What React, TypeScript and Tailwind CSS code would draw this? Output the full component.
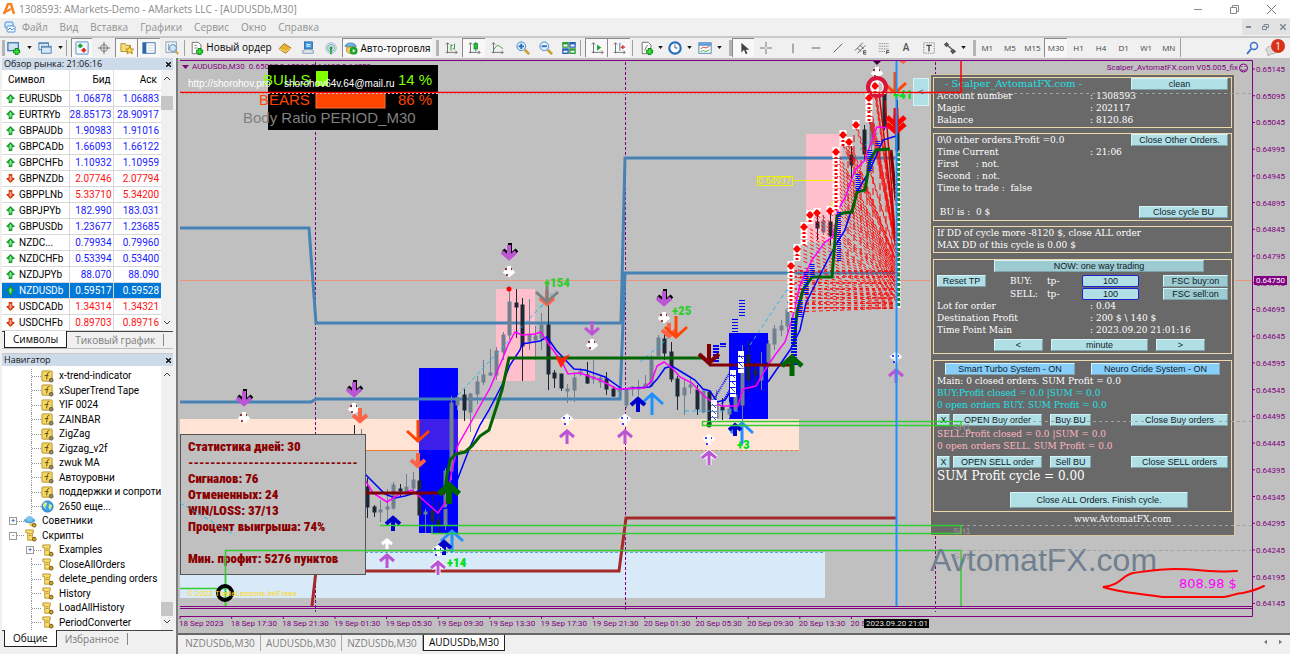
import type { ReactNode } from 'react';
import clsx from 'clsx';

const MENU = ['Файл', 'Вид', 'Вставка', 'Графики', 'Сервис', 'Окно', 'Справка'];
const TIMEFRAMES = ['M1', 'M5', 'M15', 'M30', 'H1', 'H4', 'D1', 'W1', 'MN'];
const CHART_TABS = ['NZDUSDb,M30', 'AUDUSDb,M30', 'NZDUSDb,M30', 'AUDUSDb,M30'];

const QUOTES: [string, string, string, boolean][] = [
  ['EURUSDb', '1.06878', '1.06883', true],
  ['EURTRYb', '28.85173', '28.90917', true],
  ['GBPAUDb', '1.90983', '1.91016', true],
  ['GBPCADb', '1.66093', '1.66122', true],
  ['GBPCHFb', '1.10932', '1.10959', true],
  ['GBPNZDb', '2.07746', '2.07794', false],
  ['GBPPLNb', '5.33710', '5.34200', false],
  ['GBPJPYb', '182.990', '183.031', true],
  ['GBPUSDb', '1.23677', '1.23685', true],
  ['NZDC...', '0.79934', '0.79960', true],
  ['NZDCHFb', '0.53394', '0.53400', true],
  ['NZDJPYb', '88.070', '88.090', true],
  ['NZDUSDb', '0.59517', '0.59528', true],
  ['USDCADb', '1.34314', '1.34321', false],
  ['USDCHFb', '0.89703', '0.89716', false],
];

type TreeItem = { label: string; icon: 'fx' | 'globe' | 'hat' | 'script'; level: number; box?: '+' | '-' };

const TREE: TreeItem[] = [
  { label: 'x-trend-indicator', icon: 'fx', level: 2 },
  { label: 'xSuperTrend Tape', icon: 'fx', level: 2 },
  { label: 'YIF 0024', icon: 'fx', level: 2 },
  { label: 'ZAINBAR', icon: 'fx', level: 2 },
  { label: 'ZigZag', icon: 'fx', level: 2 },
  { label: 'Zigzag_v2f', icon: 'fx', level: 2 },
  { label: 'zwuk MA', icon: 'fx', level: 2 },
  { label: 'Автоуровни', icon: 'fx', level: 2 },
  { label: 'поддержки и сопротив', icon: 'fx', level: 2 },
  { label: '2650 еще...', icon: 'globe', level: 2 },
  { label: 'Советники', icon: 'hat', level: 1, box: '+' },
  { label: 'Скрипты', icon: 'script', level: 1, box: '-' },
  { label: 'Examples', icon: 'script', level: 2, box: '+' },
  { label: 'CloseAllOrders', icon: 'script', level: 2 },
  { label: 'delete_pending orders', icon: 'script', level: 2 },
  { label: 'History', icon: 'script', level: 2 },
  { label: 'LoadAllHistory', icon: 'script', level: 2 },
  { label: 'PeriodConverter', icon: 'script', level: 2 },
];

/* ---------- toolbar ---------- */

const plus = <path d="M11 8v8M7 12h8" stroke="#0b8a12" strokeWidth="4" />;
const plusIn = <path d="M11 9v6M8 12h6" stroke="#35e03c" strokeWidth="2" />;
const axes = <path d="M4 2v12M2 13h13M2 4l2-2 2 2M13 11l2 2-2 2" stroke="#666" strokeWidth="1" />;
const sheet = <path d="M2.500 1.500h7l3 3v10h-10z" fill="#fff" stroke="#666" />;

const ICONS: Record<string, ReactNode> = {
  newChart: <><rect x="1" y="2" width="12" height="9" fill="#cfe3f5" stroke="#3f79ad" strokeWidth="1.500" />{plus}{plusIn}</>,
  profiles: (
    <>
      <rect x="1" y="2" width="11" height="8" fill="#e9f2fb" stroke="#3f79ad" />
      <rect x="4" y="6" width="11" height="8" fill="#d5e6f7" stroke="#3f79ad" />
      <path d="M4 7h11M1 3h11" stroke="#3f79ad" />
    </>
  ),
  market: (
    <>
      <rect x="1" y="1" width="14" height="14" rx="1" fill="#eef6ff" stroke="#4a86c0" />
      <path d="M6 3l2.500 2.500L6 8 3.500 5.500z" fill="#18a52a" stroke="#18a52a" />
      <path d="M10 8l2.500 2.500L10 13l-2.500-2.500z" fill="#e02a1c" stroke="#e02a1c" />
    </>
  ),
  cross: <><circle cx="8" cy="8" r="4" stroke="#666" /><path d="M8 1v14M1 8h14" stroke="#666" /></>,
  navigator: (
    <>
      <path d="M1 3h5l1 2h5v7H1z" fill="#f5dc7a" stroke="#b08a20" />
      <path d="M11 6l1.500 3 3 .3-2.200 2 .7 3.200-3-1.700-3 1.700.7-3.200-2.200-2 3-.3z" fill="#ffd94a" stroke="#b07d12" />
    </>
  ),
  terminal: <><rect x="1" y="2" width="14" height="12" fill="#fff" stroke="#2c68a8" /><rect x="1" y="2" width="4" height="12" fill="#2c68a8" /><path d="M7 5h6M7 8h6M7 11h6" stroke="#b8cfe6" /></>,
  tester: <><rect x="1" y="1" width="12" height="12" fill="#eef3f8" stroke="#8a9db0" /><path d="M4 3v8M7 5v6" stroke="#8a9db0" /><circle cx="9" cy="8" r="4" fill="#cfe6fb" stroke="#4b84b8" /><path d="M12 11l3 4" stroke="#caa03a" strokeWidth="2" /></>,
  order: <>{sheet}<path d="M5 5h3M5 8h4" stroke="#888" />{plus}{plusIn}</>,
  gold: <><path d="M1 9l6-6 8 5-6 6z" fill="#e8b030" stroke="#9a6a10" /><path d="M1 9l8 3 6-4" stroke="#fbe08a" /></>,
  vps: <><rect x="4" y="1" width="9" height="8" fill="#3f96e0" stroke="#2468a8" /><path d="M7 3v4M7 4h4M7 6h4" stroke="#fff" /><path d="M2 11c3-2 9-2 12 0v3H2z" fill="#dfe7ee" stroke="#7c95ad" /></>,
  signals: <><circle cx="8" cy="8" r="6" stroke="#8fb4c8" /><circle cx="8" cy="8" r="4" stroke="#5d93c0" /><circle cx="8" cy="8" r="2" fill="#2aa53a" /><path d="M8 8v7" stroke="#2aa53a" strokeWidth="2" /></>,
  auto: <><path d="M1 6c2-5 11-5 13 0z" fill="#7ab8e6" stroke="#3a7db5" /><path d="M3 7h9v5c-2 3-7 3-9 0z" fill="#f2cf62" stroke="#b08a20" /><circle cx="11" cy="11" r="4.500" fill="#18a52a" /><path d="M10 9v4l3-2z" fill="#fff" /></>,
  bars: <>{axes}<path d="M8 4v7M12 3v6M10 9h2M8 5h2" stroke="#13902a" /></>,
  candles: <>{axes}<path d="M10 1v11" stroke="#13902a" /><rect x="8" y="3" width="4" height="6" fill="#28c23c" stroke="#13902a" /></>,
  line: <>{axes}<path d="M4 10l4-5 3 1 4 3" stroke="#28a53c" /></>,
  zoomIn: <><path d="M10 10l5 5" stroke="#caa03a" strokeWidth="3" /><circle cx="6" cy="6" r="5" fill="#dcefff" stroke="#3a80c2" /><path d="M6 3v6M3 6h6" stroke="#2a6bb0" strokeWidth="2" /></>,
  zoomOut: <><path d="M10 10l5 5" stroke="#caa03a" strokeWidth="3" /><circle cx="6" cy="6" r="5" fill="#dcefff" stroke="#3a80c2" /><path d="M3 6h6" stroke="#2a6bb0" strokeWidth="2" /></>,
  tile: (
    <>
      <path d="M1 2h6v5H1zM9 9h6v5H9z" fill="#fff" stroke="#2f9f35" strokeWidth="1.500" />
      <path d="M9 2h6v5H9zM1 9h6v5H1z" fill="#fff" stroke="#2a62c0" strokeWidth="1.500" />
      <path d="M1 3h6M9 10h6" stroke="#2f9f35" strokeWidth="2" />
      <path d="M9 3h6M1 10h6" stroke="#2a62c0" strokeWidth="2" />
    </>
  ),
  scroll: <>{axes}<path d="M8 4v7l5-3.500z" fill="#28a53c" /></>,
  shift: <>{axes}<path d="M9 2v9" stroke="#2a62c0" /><path d="M15 7h-4M13 5l-2 2 2 2" stroke="#d03a1c" strokeWidth="1.500" /></>,
  indicator: <>{sheet}<path d="M5 11c2 0 1-6 4-6" stroke="#666" />{plus}{plusIn}</>,
  clock: <><circle cx="8" cy="8" r="6.500" fill="#fff" stroke="#2a6fc0" strokeWidth="2.500" /><path d="M8 4v4h3" stroke="#444" /></>,
  template: <><rect x="1" y="2" width="14" height="12" fill="#fff" stroke="#3f79ad" /><path d="M1 4h14" stroke="#5b9ad6" strokeWidth="3" /><path d="M3 9l3-2 3 1 4-2" stroke="#c03020" /><path d="M3 12l3-1 3 1 4-2" stroke="#28a53c" /></>,
  pointer: <path d="M5 2v11l3-3 2 5 2-1-2-4h4z" fill="#444" />,
  crosshair: <path d="M8 1v6M8 9v6M1 8h6M9 8h6" stroke="#666" />,
  vline: <path d="M8 3v11" stroke="#555" />,
  hline: <path d="M3 8h10" stroke="#555" />,
  trend: <path d="M3 13L13 3" stroke="#555" />,
  channel: <><path d="M1 11L10 2M4 14L13 5M4 8l4 4M7 5l4 4" stroke="#555" /><path d="M14 11h-3v4h3M11 13h3" stroke="#444" /></>,
  fibo: <><path d="M2 3h12M2 6h12M2 9h12M2 12h7" stroke="#666" strokeDasharray="1 1" /><path d="M14 11h-3v4M11 13h3" stroke="#444" /></>,
  arrows: <><path d="M4 1l3 3-3 3-3-3z" fill="#555" /><path d="M4 4l7 6" stroke="#555" strokeWidth="1.500" /><path d="M8 11l4-2 3 3-4 3z" fill="#555" /></>,
};

function Icon({ name }: { name: string }) {
  return (
    <svg viewBox="0 0 16 16" className="size-3.5 shrink-0" fill="none" aria-hidden="true">
      {ICONS[name]}
    </svg>
  );
}

function Tool({ name, wide = 'w-[23px]', on, text }: { name: string; wide?: string; on?: boolean; text?: string }) {
  return (
    <button
      aria-label={text ?? name}
      className={clsx('flex h-[19px] items-center justify-center shrink-0', wide, on && 'bg-[#f8f8f8] border-l border-t border-[#8a8a8a]')}
    >
      <Icon name={name} />
      {text && <span className="whitespace-nowrap pl-0.5 text-[10px] text-black">{text}</span>}
    </button>
  );
}

function Drop({ wide }: { wide: string }) {
  return (
    <button aria-label="more" className={clsx('flex items-center justify-center shrink-0', wide)}>
      <svg viewBox="0 0 6 4" className="w-[5px] h-[3px]"><path d="M0 0h6L3 4z" fill="#111" /></svg>
    </button>
  );
}

function Sep({ wide, grip }: { wide: string; grip?: boolean }) {
  return (
    <span className={clsx('flex h-[19px] items-center justify-end gap-px shrink-0', wide)}>
      {!grip && <span className="h-4 w-px bg-[#a0a0a0] mr-1" />}
      {grip && <span className="h-4 w-[3px] bg-[#b4b4b4]" />}
    </span>
  );
}

function Toolbar() {
  return (
    <div className="flex h-[22px] items-start border-t-2 border-[#c9c9c9] bg-[#f0f0f0] overflow-hidden">
      <div className="flex h-[19px] w-full items-center">
        <Sep wide="w-[5px]" grip />
        <Tool name="newChart" wide="w-[18px]" />
        <Drop wide="w-[12px]" />
        <Tool name="profiles" wide="w-[20px]" />
        <Drop wide="w-[10px]" />
        <Sep wide="w-[6px]" />
        <Tool name="market" wide="w-[21px]" on />
        <Tool name="cross" />
        <Tool name="navigator" wide="w-[22px]" on />
        <Tool name="terminal" on />
        <Tool name="tester" />
        <Sep wide="w-[6px]" />
        <Tool name="order" wide="w-[84px]" text="Новый ордер" />
        <Tool name="gold" />
        <Tool name="vps" />
        <Tool name="signals" />
        <Tool name="auto" wide="w-[90px]" on text="Авто-торговля" />
        <Sep wide="w-[7px]" grip />
        <Tool name="bars" />
        <Tool name="candles" on />
        <Tool name="line" />
        <Sep wide="w-[3px]" />
        <Tool name="zoomIn" />
        <Tool name="zoomOut" />
        <Tool name="tile" />
        <Sep wide="w-[5px]" />
        <Tool name="scroll" wide="w-[22px]" on />
        <Tool name="shift" on />
        <Sep wide="w-[7px]" />
        <Tool name="indicator" wide="w-[19px]" />
        <Drop wide="w-[9px]" />
        <Tool name="clock" wide="w-[20px]" />
        <Drop wide="w-[9px]" />
        <Tool name="template" wide="w-[22px]" />
        <Drop wide="w-[6px]" />
        <Sep wide="w-[10px]" grip />
        <Tool name="pointer" wide="w-[22px]" on />
        <Tool name="crosshair" />
        <Sep wide="w-[4px]" />
        <Tool name="vline" />
        <Tool name="hline" />
        <Tool name="trend" wide="w-[22px]" />
        <Tool name="channel" />
        <Tool name="fibo" />
        <button className="w-[22px] text-[10px] font-semibold text-[#555]">A</button>
        <button aria-label="label" className="flex w-[23px] justify-center">
          <svg viewBox="0 0 16 16" className="size-3.5" fill="none">
            <rect x="2" y="2" width="12" height="12" stroke="#666" strokeDasharray="1 1" />
            <path d="M5 5h6M8 5v7" stroke="#444" strokeWidth="1.500" />
          </svg>
        </button>
        <Tool name="arrows" wide="w-[19px]" />
        <Drop wide="w-[8px]" />
        <Sep wide="w-[9px]" grip />
        <div className="flex w-[204px] shrink-0">
          {TIMEFRAMES.map((tf) => (
            <button
              key={tf}
              className={clsx('h-[19px] flex-1 text-[8px] text-[#444]', tf === 'M30' && 'bg-[#f8f8f8] border-l border-t border-[#8a8a8a]')}
            >
              {tf}
            </button>
          ))}
        </div>
        <span className="h-[19px] w-px bg-[#a0a0a0]" />
        <div className="ml-auto mr-1 flex items-center gap-1">
          <button aria-label="search">
            <svg viewBox="0 0 16 16" className="size-4" fill="none">
              <path d="M3 14l4-5" stroke="#3a6fd0" strokeWidth="2" />
              <circle cx="10" cy="6" r="3.500" stroke="#3a6fd0" strokeWidth="1.500" />
            </svg>
          </button>
          <button aria-label="messages">
            <svg viewBox="0 0 22 18" className="w-[22px] h-[18px]" fill="none">
              <path d="M2 11c0-5 10-5 11 0 0 3-3 4-6 4l-3 2v-3c-1-1-2-2-2-3z" fill="#dcdcdc" stroke="#b0b0b0" />
              <circle cx="14" cy="7" r="7" fill="#d9301a" />
              <text x="14" y="11" textAnchor="middle" fontSize="10" fill="#fff">1</text>
            </svg>
          </button>
        </div>
      </div>
    </div>
  );
}

/* ---------- left docks ---------- */

function DockTitle({ children }: { children: ReactNode }) {
  return (
    <div className="flex h-3 shrink-0 items-center justify-between bg-[#cddaea] pl-0.5 pr-0.5 text-[9px] leading-3 text-[#111]">
      <span>{children}</span>
      <button aria-label="close">
        <svg viewBox="0 0 6 6" className="size-[5px]"><path d="M0 0l6 6M6 0L0 6" stroke="#000" strokeWidth="1.500" /></svg>
      </button>
    </div>
  );
}

function DockTabs({ active, other }: { active: string; other: string }) {
  return (
    <div className="flex h-[17px] shrink-0 items-start border-t border-[#444] pl-0.5 text-[10px] leading-4">
      <button className="-mt-px h-[17px] border border-t-0 border-[#222] bg-white px-2 text-black">{active}</button>
      <button className="px-2 text-[#7a7a7a]">{other}</button>
      <span className="mt-[2px] h-3 w-px bg-[#888]" />
    </div>
  );
}

function ScrollBar({ end }: { end?: boolean }) {
  return (
    <div className="flex w-[12px] shrink-0 flex-col items-center bg-[#f0f0f0] py-1.5">
      <svg viewBox="0 0 6 4" className="w-[6px]" fill="none"><path d="M0 4l3-3 3 3" stroke="#444" /></svg>
      <div className={clsx('flex w-full grow flex-col', end ? 'justify-end pb-1' : 'pt-4')}>
        <span className="h-[14px] w-full bg-[#c6c6c6]" />
      </div>
      <svg viewBox="0 0 6 4" className="w-[6px]" fill="none"><path d="M0 0l3 3 3-3" stroke="#444" /></svg>
    </div>
  );
}

function MarketWatch() {
  return (
    <section className="flex h-[291px] flex-col border-b border-[#bdbdbd]">
      <DockTitle>Обзор рынка: 21:06:16</DockTitle>
      <div className="flex grow bg-white">
        <table className="grow table-fixed border-collapse text-[10px] leading-[15px] font-['Roboto','Open_Sans',sans-serif]">
          <thead>
            <tr className="h-5 border-b border-[#d8d8d8] text-black">
              <th className="w-[67px] border-r border-[#e0e0e0] pl-1.5 text-left font-normal">Символ</th>
              <th className="w-[44px] border-r border-[#e0e0e0] pr-0.5 text-right font-normal">Бид</th>
              <th className="pr-1 text-right font-normal">Аск</th>
            </tr>
          </thead>
          <tbody>
            {QUOTES.map(([symbol, bid, ask, up]) => {
              const selected = symbol === 'NZDUSDb';
              const tone = selected ? 'text-white' : up ? 'text-[#1a1aff]' : 'text-[#ff1010]';
              return (
                <tr key={symbol} className={clsx('h-4 border-b border-[#d8d8d8]', selected ? 'bg-[#0078d7] text-white' : 'text-black')}>
                  <td className="border-r border-[#d8d8d8] p-0">
                    <span className="flex items-center gap-1 whitespace-nowrap pl-1">
                      <svg viewBox="0 0 10 10" className={clsx('size-[9px]', !up && 'rotate-180')}>
                        <path d="M5 0l5 5-3 1v4H3V6L0 5z" fill={up ? '#1a9a2c' : '#cc3a14'} />
                        <path d="M5 2l2 3H6v3H4V5H3z" fill={up ? '#7be88a' : '#ffa07a'} />
                      </svg>
                      {symbol}
                    </span>
                  </td>
                  <td className={clsx('border-r border-[#d8d8d8] p-0 pr-px text-right', tone)}>{bid}</td>
                  <td className={clsx('p-0 pr-0.5 text-right', tone)}>{ask}</td>
                </tr>
              );
            })}
          </tbody>
        </table>
        <ScrollBar />
      </div>
      <DockTabs active="Символы" other="Тиковый график" />
    </section>
  );
}

function TreeIcon({ icon }: { icon: TreeItem['icon'] }) {
  return (
    <svg viewBox="0 0 14 14" className="size-[13px] shrink-0" fill="none">
      {icon === 'fx' && (
        <>
          <rect x="1" y="1" width="11" height="11" rx="1" fill="#f4d665" stroke="#b5902c" />
          <path d="M9 3c-3-1-2 3-3 7M4 6h4" stroke="#5a430a" />
        </>
      )}
      {icon === 'globe' && (
        <>
          <circle cx="7" cy="7" r="6" fill="#3da2e8" stroke="#1f74b8" />
          <path d="M3 3c3-1 4 0 3 2s-2 2-1 4-2-1-3-3zM9 4l3 2-2 5-2-3z" fill="#d7f08a" />
        </>
      )}
      {icon === 'hat' && (
        <>
          <ellipse cx="6" cy="6" rx="6" ry="3" fill="#4fa8dc" />
          <ellipse cx="6" cy="4" rx="3.500" ry="3" fill="#7cc4ee" />
          <path d="M5 9h5v3H7z" fill="#e9c24d" />
        </>
      )}
      {icon === 'script' && (
        <>
          <path d="M2 1h8v3H9v5h3v3H4V9h0V4H2z" fill="#f7dc74" stroke="#bd9428" />
          <path d="M5 5h3M5 7h3" stroke="#bd9428" />
        </>
      )}
      {icon !== 'globe' && <circle cx="11" cy="11" r="2" fill={icon === 'fx' ? '#8c8c8c' : '#d8a52c'} stroke="#6d5a1c" />}
    </svg>
  );
}

function Navigator() {
  return (
    <section className="mt-1 flex flex-col border-t border-[#c8c8c8]">
      <DockTitle>Навигатор</DockTitle>
      <div className="flex h-[264px] bg-white">
        <ul className="mt-[3px] grid h-[261px] w-0 grow grid-cols-1 auto-rows-fr overflow-hidden text-[10px] leading-[14px] text-black font-['Roboto','Open_Sans',sans-serif]">
          {TREE.map((item) => (
            <li
              key={item.label}
              className={clsx('flex items-center whitespace-nowrap', item.level === 2 ? 'pl-[24px]' : 'pl-[7px]')}
            >
              <span className="flex w-[15px] shrink-0 items-center self-stretch">
                {item.box ? (
                  <span className="flex size-[8px] items-center justify-center border border-[#9a9a9a] bg-white text-[8px] leading-none text-[#2a4a9a]">
                    {item.box}
                  </span>
                ) : (
                  <span className="ml-[5px] h-full border-l border-dotted border-[#999]" />
                )}
                <span className="grow border-t border-dotted border-[#999]" />
              </span>
              <TreeIcon icon={item.icon} />
              <span className="pl-[5px]">{item.label}</span>
            </li>
          ))}
        </ul>
        <ScrollBar end />
      </div>
      <DockTabs active="Общие" other="Избранное" />
    </section>
  );
}

/* ---------- chart ---------- */

const PURPLE = '#800080';

// x, high, low, body top, body bottom, falling
const CANDLES: [number, number, number, number, number, boolean][] = [
  [354, 425, 470, 440, 460, true], [361, 429, 490, 450, 480, false], [367, 478, 518, 487, 507, true],
  [374, 505, 517, 507, 512, true], [380, 500, 522, 510, 512, false], [387, 489, 521, 507, 509, false],
  [393, 482, 510, 485, 508, false], [400, 484, 496, 489, 491, true], [406, 474, 495, 487, 492, false],
  [413, 472, 493, 480, 488, false], [419, 470, 515, 481, 515, true], [425, 509, 533, 512, 514, false],
  [432, 496, 525, 511, 521, true], [438, 502, 534, 520, 525, true], [445, 468, 530, 471, 525, false],
  [451, 396, 480, 403, 471, false], [457, 395, 410, 398, 405, false], [464, 389, 421, 395, 410, true],
  [470, 393, 432, 394, 412, false], [477, 376, 404, 382, 394, false], [483, 360, 385, 375, 382, false],
  [490, 349, 376, 373, 375, false], [496, 347, 380, 351, 375, false], [503, 332, 360, 335, 352, false],
  [509, 289, 340, 302, 335, false], [516, 289, 338, 303, 307, true], [522, 298, 381, 305, 346, true],
  [529, 299, 350, 335, 341, false], [535, 326, 360, 336, 340, false], [541, 313, 350, 325, 338, false],
  [548, 300, 390, 325, 374, true], [554, 370, 388, 373, 378, true], [561, 375, 391, 374, 388, true],
  [567, 384, 403, 389, 391, false], [574, 372, 402, 378, 390, false], [580, 368, 376, 372, 374, false],
  [587, 362, 384, 375, 383, true], [593, 360, 384, 377, 379, false], [600, 375, 388, 378, 382, false],
  [606, 372, 395, 379, 389, true], [613, 386, 397, 389, 396, true], [619, 385, 396, 390, 391, false],
  [626, 388, 408, 390, 405, false], [632, 386, 396, 387, 389, false], [638, 380, 396, 387, 389, false],
  [645, 375, 388, 384, 387, false], [651, 355, 387, 360, 386, false], [658, 335, 356, 338, 356, false],
  [664, 330, 360, 339, 353, true], [671, 342, 382, 352, 379, true], [677, 376, 410, 379, 396, true],
  [684, 380, 415, 388, 395, false], [690, 376, 394, 385, 387, false], [697, 385, 415, 390, 409, true],
  [703, 393, 413, 391, 412, false], [709, 391, 426, 392, 424, true], [716, 390, 420, 402, 418, false],
  [722, 398, 420, 407, 410, true], [729, 402, 418, 409, 414, false], [735, 370, 411, 395, 410, false],
  [742, 345, 424, 365, 405, false], [748, 340, 392, 355, 380, true], [755, 362, 388, 370, 375, true],
  [761, 352, 390, 365, 380, false], [768, 340, 368, 344, 362, false], [774, 325, 350, 329, 344, false],
  [781, 320, 336, 326, 330, false], [787, 300, 332, 310, 326, false], [817, 210, 240, 222, 228, true],
  [823, 215, 235, 221, 232, false], [830, 212, 245, 222, 236, true], [851, 138, 180, 155, 165, true],
  [864, 125, 160, 130, 154, true], [871, 95, 150, 120, 145, false], [884, 90, 130, 92, 127, true],
  [897, 100, 152, 132, 150, true],
];

const TRADE_COLUMNS: [number, number, number][] = [
  [791, 264, 312], [797, 247, 262], [804, 225, 245], [810, 213, 224], [817, 211, 216],
  [830, 209, 214], [836, 150, 210], [843, 133, 146], [849, 140, 146], [856, 123, 129],
  [869, 96, 122], [875, 84, 96],
];

const TRADE_LINES = TRADE_COLUMNS.flatMap(([x, top, bottom]) => {
  const lines: [number, number, number][] = [];
  for (let y = top; y <= bottom; y += 4) lines.push([x, y, Math.round(307 - (307 - y) * 0.25)]);
  return lines;
});

type ArrowProps = { x: number; y: number; color: string; up?: boolean; s?: number; w?: number; edge?: string };

function Arrow({ x, y, color, up, s = 7, w = 4, edge }: ArrowProps) {
  const d = up ? `M0 ${s}V${-s + 1}M${-s} 0L0 ${-s + 1}L${s} 0` : `M0 ${-s}V${s - 1}M${-s} 0L0 ${s - 1}L${s} 0`;
  return (
    <g transform={`translate(${x} ${y})`} fill="none">
      {edge && !up && <path d={d} stroke={edge} strokeWidth={w} transform="translate(1 -2)" />}
      {edge && up && <path d={d} stroke={edge} strokeWidth={w + 2} />}
      <path d={d} stroke={color} strokeWidth={w} />
    </g>
  );
}

function Fleck({ x, y, color, up }: { x: number; y: number; color: string; up?: boolean }) {
  return (
    <g>
      <Arrow x={x} y={y} color="#fff" s={5} w={4} up={up} />
      <path d={`M${x - 3} ${y + 4}h2M${x + 2} ${y - 2}h1M${x - 4} ${y - 2}h2`} stroke={color} strokeWidth="1.500" />
    </g>
  );
}

function Axes() {
  const times = [
    '18 Sep 2023', '18 Sep 17:30', '18 Sep 21:30', '19 Sep 01:30', '19 Sep 05:30', '19 Sep 09:30', '19 Sep 13:30',
    '19 Sep 17:30', '19 Sep 21:30', '20 Sep 01:30', '20 Sep 05:30', '20 Sep 09:30', '20 Sep 13:30', '20 S',
  ];
  return (
    <g fontSize="8" fill={PURPLE} className="font-['Roboto','Noto_Sans',sans-serif]">
      <path d="M180 60.500H1252.500V616.500H180M180 606.500H1252M180 608.500H1252" stroke={PURPLE} fill="none" />
      {times.map((t, i) => (
        <g key={t}>
          <path d={`M${180 + i * 51.65} 616v3`} stroke={PURPLE} />
          <text x={179 + i * 51.65} y="626">{t}</text>
        </g>
      ))}
      {Array.from({ length: 21 }, (_, i) => (
        <g key={i}>
          <path d={`M1252 ${69 + i * 26.72}h3`} stroke={PURPLE} />
          <text x="1256" y={72 + i * 26.72}>{(0.65145 - i * 0.0005).toFixed(5)}</text>
        </g>
      ))}
      <rect x="1254" y="276" width="33" height="9" />
      <text x="1256" y="283" fill="#fff">0.64750</text>
      <rect x="864" y="619" width="65" height="9" fill="#000" />
      <text x="866" y="626" fill="#e0e0e0">2023.09.20 21:01</text>
      <path d="M182 65h7l-3.500 4z" />
      <text x="192" y="69">AUDUSDb,M30&nbsp; 0.65087 0.65088 0.64697 0.64750</text>
      <text x="1238" y="70" textAnchor="end">Scalper_AvtomatFX.com V05.005_fix</text>
      <g fill="none" stroke={PURPLE}>
        <circle cx="1243.500" cy="68" r="4" />
        <path d="M1241 69c1 2 4 2 5 0M1242 66v1M1245 66v1" />
      </g>
    </g>
  );
}

function Plot() {
  return (
    <g fill="none">
      {/* zones */}
      <rect x="180" y="419" width="619" height="31" fill="#ffe3d4" />
      <path d="M180 450.500H799" stroke="#f07830" strokeDasharray="3 2" />
      <path d="M365 450.500H419" stroke="#f07830" />
      <rect x="180" y="552" width="645" height="46" fill="#d8e9f8" />
      <path d="M365 552.500H825" stroke="#56a8d8" strokeDasharray="3 2" />
      <rect x="496" y="289" width="39" height="92" fill="#ffc0cb" />
      <rect x="806" y="134" width="36" height="108" fill="#ffc0cb" />
      <rect x="419" y="368" width="39" height="165" fill="#0000ff" />
      <rect x="419" y="419" width="39" height="31" fill="#3c20ea" />
      <rect x="729" y="333" width="39" height="86" fill="#0000ff" />
      <path d="M315.500 62V434M315.500 575V612M625.500 62V612M935.500 62V74M935.500 536V612" stroke={PURPLE} strokeDasharray="3 2" />
      <path d="M180 280.500H1252" stroke="#e9967a" />

      {/* levels */}
      <path d="M180 228H309L316 323H621L625 158H896M180 402H311L316 399H620L625 273H898" stroke="#4682b4" strokeWidth="3" />
      <path d="M312 606L316 571H619L626 518H897" stroke="#a52a2a" strokeWidth="3" />

      {CANDLES.map(([x, high, low, top, bottom, falling]) => (
        <g key={x} stroke={falling ? '#1c2836' : '#708090'} fill={falling ? '#1c2836' : '#708090'}>
          <path d={`M${x + 0.5} ${high}V${low}`} />
          <rect x={x - 1} y={top} width="3" height={Math.max(bottom - top, 1)} />
        </g>
      ))}

      {/* trade links */}
      <path d="M458 395L545 302M640 362L672 335M750 345L790 285M685 411H740M541 307L555 290M860 150L897 115" stroke="#20b8f0" strokeDasharray="4 3" />
      <g stroke="#ff0000">
        {TRADE_LINES.map(([x, y, end]) => (
          <path key={`${x}-${y}`} d={`M${x} ${y}L898 ${end}`} strokeWidth="0.900" strokeDasharray="4 3" />
        ))}
        {[271, 277, 283, 289, 294, 298, 303, 308].map((y) => (
          <path key={y} d={`M794 ${y}H897`} strokeWidth="1.500" strokeDasharray="3 3" />
        ))}
        <path d="M848 150V265M854 135V262M861 160V268M867 165V260M873 155V262M880 150V268M886 150V272M892 155V270" strokeDasharray="7 4" />
      </g>
      <path d="M879 92L890 190L896 250M885 100L897 260M891 155L896 205" stroke="#d00000" strokeWidth="1.500" />

      {/* averages */}
      <path
        d="M365 474L375 484 385 494 395 498 405 496 415 493 420 490 430 500 440 509 447 508 452 495 458 478 470 447 480 425 489 410 502 385 510 365 520 350 522 344 540 341 547 337 556 350 574 369 585 370 605 377 622 389 650 387 658 378 665 368 672 366 680 371 695 380 703 389 710 391 717 402 725 400 740 376M768 382L790 350 800 330 806 303 820 275 835 246 845 230 858 190 870 170 883 140 896 136"
        stroke="#0000ff" strokeWidth="1.500"
      />
      <path
        d="M365 480L373 493 387 502 398 495 412 490 420 497 438 513 447 500 452 470 458 445 470 424 490 388 502 360 508 345 515 332 522 335 535 334 541 332 550 346 562 362 568 374 580 373 600 380 617 389 645 388 652 380 657 366 664 362 672 368 680 377 692 383 703 395 712 402 722 406 738 406 743 389 756 386 765 370 775 355 785 342 792 320 800 285 812 260 825 242 833 237 838 210 845 198 855 170 865 160 872 140 877 127 890 128"
        stroke="#ff00ff" strokeWidth="1.500"
      />
      <path d="M365 493H445M709 365H792M891 150L896 200" stroke="#800000" strokeWidth="3" />
      <path
        d="M445 493L447 475 450 460 456 454 465 452 472 446 480 436 489 430 502 390 509 358H705M794 345L797 312 803 290 812 277H832L837 216 843 213 852 212 857 192 865 190 870 160 876 150 890 149"
        stroke="#006400" strokeWidth="3"
      />

      {/* trade marks */}
      {TRADE_COLUMNS.map(([x, top, bottom]) => (
        <g key={x}>
          <path d={`M${x} ${top - 3}V${bottom}`} stroke="#fff" strokeWidth="7" strokeDasharray="5 1" />
          <path d={`M${x} ${top - 1}V${bottom}`} stroke="#ff0000" strokeWidth="3" strokeDasharray="2 2" />
          <path d={`M${x - 4} ${top + 2}l4-4 4 4-4 4z`} fill="#ff0000" />
        </g>
      ))}
      <path d="M898 153V308" stroke="#fff" strokeWidth="5" strokeDasharray="3 1" />
      <path d="M898.500 153V308" stroke="#108a20" strokeWidth="3" strokeDasharray="3 2" />
      <g stroke="#0000ff" strokeDasharray="1 1">
        <path d="M794 318V366" strokeWidth="6" strokeDasharray="2 1" />
        <path d="M800 300V318" strokeWidth="5" />
        <path d="M806 272V295M812 264V278" strokeWidth="5" />
        <path d="M839 212V262" strokeWidth="4" />
        <path d="M858 174V192M870 150V172M878 141V147" strokeWidth="5" />
        <path d="M742 300V318" strokeWidth="6" strokeDasharray="1 2" />
        <path d="M735 319V333" strokeWidth="6" strokeDasharray="1 2" />
        <path d="M716 345V362M723 343V347" strokeWidth="6" strokeDasharray="2 1" />
        <path d="M711 404L742 352M722 404L735 380" strokeWidth="2" />
      </g>
      <path d="M714 400V422M733 370V397M741 351V373" stroke="#fff" strokeWidth="6" strokeDasharray="5 1" />
      <path d="M712 404l4 4M712 410l4 4M712 416l4 4M731 374l4 4M731 381l4 4M731 388l4 4M739 355l4 4M739 363l4 4" stroke="#4040e0" />

      {/* signals */}
      {[[244, 398], [354, 389], [509, 252], [664, 298]].map(([x, y]) => (
        <g key={x}>
          <Arrow x={x} y={y} color="#ba55d3" edge="#000" />
          <Fleck x={x} y={y + 19} color="#800000" />
        </g>
      ))}
      <Arrow x={592} y={328} color="#ba55d3" w={3} />
      <Fleck x={592} y={344} color="#800000" />
      <Fleck x={877} y={72} color="#800000" />
      <path d="M873 61h8l-4 4z" fill="#400040" />
      <path d="M899 61h8l-4 3z" fill="#ff6347" />
      <Arrow x={418} y={431} color="#ff4500" s={11} w={3} />
      <Arrow x={418} y={460} color="#ff6347" />
      <Arrow x={360} y={415} color="#ff6347" />
      <Arrow x={669} y={330} color="#ff6347" />
      <Arrow x={676} y={327} color="#ff4500" s={11} w={3} />
      <Arrow x={547} y={298} color="#ff6347" />
      <Arrow x={547} y={292} color="#808080" s={11} w={3} />
      <Arrow x={895} y={83} color="#ff4500" s={11} w={3} />
      <Arrow x={896} y={117} color="#ff0000" s={9} w={5} />
      <Arrow x={896} y={124} color="#ff0000" s={9} w={5} />
      <Arrow x={709} y={354} color="#800000" s={10} w={4} />
      <Arrow x={449} y={494} color="#006400" s={10} w={6} up />
      <Arrow x={792} y={366} color="#006400" s={10} w={5} up />
      <Arrow x={452} y={541} color="#1e90ff" s={11} w={3} up />
      <Arrow x={652} y={404} color="#1e90ff" s={11} w={3} up />
      <Arrow x={742} y={433} color="#1e90ff" s={11} w={3} up />
      <Arrow x={393} y={524} color="#0000cd" s={7} up />
      <Arrow x={444} y={548} color="#0000cd" s={7} up />
      <Arrow x={638} y={405} color="#0000cd" s={7} up />
      <Arrow x={735} y={430} color="#0000cd" s={6} up />
      <Arrow x={387} y={561} color="#ba55d3" w={3} up />
      <Arrow x={387} y={544} color="#fff" s={5} w={3} up />
      <Arrow x={438} y={568} color="#ba55d3" edge="#fff" w={3} up />
      <Fleck x={438} y={551} color="#0000cd" up />
      <Arrow x={567} y={437} color="#ba55d3" w={3} up />
      <Fleck x={567} y={420} color="#0000ff" up />
      <Arrow x={625} y={437} color="#ba55d3" w={3} up />
      <Fleck x={625} y={420} color="#0000ff" up />
      <Arrow x={709} y={458} color="#ba55d3" edge="#fff" w={3} up />
      <Fleck x={709} y={440} color="#0000ff" up />
      <Arrow x={896} y={376} color="#ba55d3" w={3} up />
      <Fleck x={896} y={358} color="#0000ff" up />
      <path d="M555 356l6 12 9-14-8 4z" fill="#ff2010" />
      <circle cx="509" cy="289" r="2.500" fill="#ff0000" />
      <circle cx="877" cy="87" r="9" stroke="#dc143c" strokeWidth="4" />
      <circle cx="877" cy="87" r="6" stroke="#fff" />
      <circle cx="709" cy="425" r="2.500" fill="#006400" />

      <path d="M180 588.500H225.500V606M225.500 590V550.500H961V606M380 525.500H961V533.500H432V526M961 421.500H702.500V425.500H961" stroke="#32cd32" strokeWidth="1.500" />
      <path d="M896.500 61V606" stroke="#1e90ff" strokeWidth="2" />
      <rect x="757.500" y="176.500" width="35" height="9" stroke="#f0f000" />
      <path d="M792 180.500H834M832 207v-6" stroke="#f0f000" />

      <g fill="#32cd32" fontSize="13" fontWeight="900" className="font-['Roboto_Condensed','Roboto',sans-serif]">
        <text x="544" y="287">+154</text>
        <text x="672" y="315">+25</text>
        <text x="737" y="449" fill="#00e020">+3</text>
        <text x="447" y="567" fill="#00e020">+14</text>
        <text x="893" y="99" fill="#00e020">+415</text>
      </g>
      <text x="758" y="184" fontSize="9" fill="#f0f000" className="font-['Roboto',sans-serif]">0.64937</text>
      <text x="930" y="571" fontSize="32" fill="#708090" className="font-['Liberation_Sans',sans-serif]">AvtomatFX.com</text>
      <text x="1179" y="588" fontSize="13" fill="#ff00ff" className="font-['DejaVu_Sans',sans-serif]">808.98 $</text>

      {/* body ratio box */}
      <rect x="268" y="65" width="170" height="65" fill="#000" />
      <rect x="316" y="71" width="12" height="15" fill="#7fff00" />
      <rect x="316" y="93" width="69" height="15" fill="#ff4500" stroke="#ff7038" />
      <g fontSize="15" className="font-['Liberation_Sans',sans-serif]">
        <text x="263" y="85" fill="#7fff00">BULLS</text>
        <text x="398" y="85" fill="#7fff00">14 %</text>
        <text x="259" y="105" fill="#ff4500">BEARS</text>
        <text x="398" y="105" fill="#ff4500">86 %</text>
        <text x="243" y="123" fill="#808080">Body Ratio PERIOD_M30</text>
      </g>
      <g fontSize="10" fill="#fff" className="font-['Liberation_Sans',sans-serif]">
        <text x="188" y="87">http://shorohov.pro</text>
        <text x="284" y="87">shorohov64v.64@mail.ru</text>
      </g>
    </g>
  );
}

// Price levels and objects drawn in front of the panels
function FrontObjects() {
  return (
    <svg viewBox="178 58 1112 577" className="pointer-events-none absolute left-0 top-0 h-[577px] w-[1112px]" fill="none">
      <path d="M930 93.500H1252M961 421.500H1252M961 525.500H1252M961 550.500H1252" stroke="#a0a0a0" strokeDasharray="3 3" />
      <path d="M180 92.500H961V61" stroke="#ff0000" strokeWidth="1.500" />
      <path d="M180 93.500H913" stroke="#c0c0c0" strokeDasharray="2 2" />
      <path d="M225.500 606V550.500H366M930 421.500H961V425.500H930M930 525.500H961V533.500H930" stroke="#32cd32" strokeWidth="1.500" />
      <path d="M180 503L235 535" stroke="#20b8f0" strokeDasharray="4 3" />
      <circle cx="225" cy="593" r="7" stroke="#000" strokeWidth="4" />
      <text x="187" y="596" fontSize="8" fill="#ffd700" className="font-['Liberation_Sans',sans-serif]">© 2022 TradeLessons.In/Forex</text>
      <g fontSize="9" fill="#999" className="font-['Liberation_Sans',sans-serif]">
        <text x="953" y="430">SH1</text>
        <text x="953" y="534">SH1</text>
        <text x="953" y="559">SH1</text>
      </g>
      <path
        d="M1237 571C1215 573 1200 569 1175 569 1160 569 1148 571 1133 573 1122 575 1122 585 1103 587 1120 593 1140 593 1162 597H1224C1232 596 1236 593 1243 593 1252 591 1258 589 1264 586"
        stroke="#ff0000" strokeWidth="2" strokeLinecap="round"
      />
    </svg>
  );
}

/* ---------- expert panel ---------- */

function Btn({ children, wide, tone = 'bg-[#b0e0e6]' }: { children: ReactNode; wide: string; tone?: string }) {
  return (
    <button
      className={clsx(
        "flex h-3 items-center justify-center overflow-hidden whitespace-nowrap border border-[#d4f4f8] border-r-[#7fa3a8] border-b-[#7fa3a8] text-[9px] leading-none text-[#102028] font-['Liberation_Sans',sans-serif]",
        wide,
        tone,
      )}
    >
      {children}
    </button>
  );
}

function Group({ children, className }: { children: ReactNode; className: string }) {
  return <div className={clsx('border border-[#ecd8ac] pl-[3px] pr-[3px]', className)}>{children}</div>;
}

function Row({ label, value }: { label: ReactNode; value?: string }) {
  return (
    <div className="flex h-3 items-center whitespace-pre">
      <span className={value ? 'w-[153px]' : 'grow'}>{label}</span>
      {value && <span>: {value}</span>}
    </div>
  );
}

function TradeInput({ side }: { side: string }) {
  return (
    <input
      aria-label={`${side} tp`}
      defaultValue="100"
      className="h-3 w-[57px] rounded-[2px] border border-[#2020d0] bg-[#b0e0e6] text-center text-[9px] leading-none text-[#102028] font-['Liberation_Sans',sans-serif]"
    />
  );
}

function ExpertPanel() {
  return (
    <div className="absolute left-[752px] top-[16px] flex w-[305px] flex-col border border-[#d8c8a0] bg-[#696969] px-[2px] pb-[10px] pt-[2px] text-[9px] leading-3 text-white font-['DejaVu_Serif',serif]">
      <Group className="pb-px">
        <div className="flex h-3 items-center justify-between">
          <span className="pl-2 text-[10px] text-[#20e0e8]">- Scalper_AvtomatFX.com -</span>
          <Btn wide="w-[97px]">clean</Btn>
        </div>
        <Row label="Account number" value="1308593" />
        <Row label="Magic" value="202117" />
        <Row label="Balance" value="8120.86" />
      </Group>
      <Group className="mt-[5px] pb-[2px]">
        <div className="flex h-3 items-center justify-between">
          <span>0\0 other orders.Profit =0.0</span>
          <Btn wide="w-[97px]">Close Other Orders.</Btn>
        </div>
        <Row label="Time Current" value="21:06" />
        <Row label={'First      : not.'} />
        <Row label={'Second  : not.'} />
        <Row label={'Time to trade :  false'} />
        <Row label=" " />
        <div className="flex h-3 items-center justify-between whitespace-pre">
          <span> BU is :  0 $</span>
          <Btn wide="w-[89px]">Close cycle BU</Btn>
        </div>
      </Group>
      <Group className="mt-[5px] pb-px">
        <Row label="If DD of cycle more -8120 $, close ALL order" />
        <Row label="MAX DD of this cycle is 0.00 $" />
      </Group>
      <Group className="mt-[6px] pb-[2px]">
        <div className="flex pl-[57px]">
          <Btn wide="w-[210px]" tone="bg-[#9ccbd1]">NOW: one way trading</Btn>
        </div>
        <div className="mt-[3px] flex h-3 items-center">
          <Btn wide="w-[49px]">Reset TP</Btn>
          <span className="ml-6 w-[37px]">BUY:</span>
          <span className="w-[35px]">tp-</span>
          <TradeInput side="BUY" />
          <span className="grow" />
          <Btn wide="w-[65px]" tone="bg-[#9ccbd1]">FSC buy:on</Btn>
        </div>
        <div className="mt-px flex h-3 items-center">
          <span className="ml-[73px] w-[37px]">SELL:</span>
          <span className="w-[35px]">tp-</span>
          <TradeInput side="SELL" />
          <span className="grow" />
          <Btn wide="w-[65px]" tone="bg-[#9ccbd1]">FSC sell:on</Btn>
        </div>
        <Row label="Lot for order" value="0.04" />
        <Row label="Destination Profit" value="200 $ \ 140 $" />
        <Row label="Time Point Main" value="2023.09.20 21:01:16" />
        <div className="mt-[3px] flex gap-2 pl-[57px]">
          <Btn wide="w-[49px]">&lt;</Btn>
          <Btn wide="w-[97px]">minute</Btn>
          <Btn wide="w-[49px]">&gt;</Btn>
        </div>
      </Group>
      <Group className="mt-[6px] pb-[3px] pt-[2px]">
        <div className="flex gap-4 px-2">
          <Btn wide="w-[130px]" tone="bg-[#87cefa]">Smart Turbo System - ON</Btn>
          <Btn wide="w-[129px]" tone="bg-[#87cefa]">Neuro Gride System - ON</Btn>
        </div>
        <Row label="Main: 0 closed orders. SUM Profit = 0.0" />
        <div className="text-[#20e0e8]">
          <Row label="BUY:Profit closed = 0.0 |SUM = 0.0" />
          <Row label="0 open orders BUY. SUM Profit = 0.0" />
        </div>
        <div className="mt-[3px] flex">
          <Btn wide="w-[13px]">X</Btn>
          <Btn wide="w-[89px] ml-[3px]">OPEN Buy order</Btn>
          <Btn wide="w-[41px] ml-2">Buy BU</Btn>
          <Btn wide="w-[97px] ml-auto">Close Buy orders</Btn>
        </div>
        <div className="mt-[2px] text-[#ffb6c1]">
          <Row label="SELL:Profit closed = 0.0 |SUM = 0.0" />
          <Row label="0 open orders SELL. SUM Profit = 0.0" />
        </div>
        <div className="mt-1 flex">
          <Btn wide="w-[13px]">X</Btn>
          <Btn wide="w-[89px] ml-[3px]">OPEN SELL order</Btn>
          <Btn wide="w-[41px] ml-2">Sell BU</Btn>
          <Btn wide="w-[97px] ml-auto">Close SELL orders</Btn>
        </div>
        <p className="text-[12px] leading-4">SUM Profit cycle = 0.00</p>
        <div className="mt-2 flex h-4 items-stretch pl-[73px]">
          <button className="w-[178px] border border-[#d4f4f8] border-b-[#7fa3a8] border-r-[#7fa3a8] bg-[#b0e0e6] text-[9px] leading-none text-[#102028] font-['Liberation_Sans',sans-serif]">
            Close ALL Orders. Finish cycle.
          </button>
        </div>
      </Group>
      <a href="#site" className="ml-[141px] mt-px">www.AvtomatFX.com</a>
    </div>
  );
}

function StatsPanel() {
  return (
    <div className="absolute left-[2px] top-[376px] w-[186px] border border-[#555] bg-[#c0c0c0] pb-[7px] pl-[7px] pt-1 text-[13px] font-black leading-4 text-[#8b0000] whitespace-nowrap font-['Roboto_Condensed','Roboto',sans-serif]">
      <p>Статистика дней: 30</p>
      <p>-------------------------------</p>
      <p>Сигналов: 76</p>
      <p>Отмененных: 24</p>
      <p>WIN/LOSS: 37/13</p>
      <p>Процент выигрыша: 74%</p>
      <p className="mt-4">Мин. профит: 5276 пунктов</p>
    </div>
  );
}

function ChartWindow() {
  return (
    <main className="flex min-w-0 grow flex-col border-l-2 border-[#7a7a7a]">
      <div className="relative min-h-[577px] grow overflow-hidden border-b-2 border-[#666] bg-[#c0c0c0]">
        <svg viewBox="178 58 1112 577" className="absolute left-0 top-0 h-[577px] w-[1112px]">
          <Axes />
          <Plot />
        </svg>
        <button className="absolute left-[735px] top-[20px] h-7 w-4 border border-[#d4f4f8] bg-[#b0e0e6] text-[9px] text-[#222]">&lt;</button>
        <ExpertPanel />
        <StatsPanel />
        <FrontObjects />
      </div>
      <div className="flex h-[19px] items-start bg-[#f0f0f0] pl-[2px] text-[10px] leading-4 text-[#808080]">
        {CHART_TABS.map((tab, i) =>
          i === 3 ? (
            <button key={i} className="-mt-[2px] h-[18px] border-x border-b border-[#222] bg-white px-[5px] pt-px text-black">{tab}</button>
          ) : (
            <button key={i} className="w-[81px] border-r border-[#aaa]">{tab}</button>
          ),
        )}
        <span className="ml-auto flex gap-3 px-2 pt-1">
          <svg viewBox="0 0 4 6" className="w-[3px] h-[6px]"><path d="M4 0v6L0 3z" fill="#777" /></svg>
          <svg viewBox="0 0 4 6" className="w-[3px] h-[6px]"><path d="M0 0v6l4-3z" fill="#777" /></svg>
        </span>
      </div>
    </main>
  );
}

export default function App() {
  return (
    <div className="flex min-h-screen flex-col overflow-hidden bg-[#f0f0f0] font-['Open_Sans','Noto_Sans',sans-serif]">
      <header>
        <div className="flex h-[18px] items-center bg-white pl-[3px] text-[10px] text-[#8a8a8a]">
          <svg viewBox="0 0 12 12" className="mr-1 size-3" fill="none">
            <path d="M1 11L5 1h3l3 10" stroke="#f58220" strokeWidth="2.500" />
            <path d="M0 10l8-4" stroke="#f58220" strokeWidth="2" />
          </svg>
          <span>1308593: AMarkets-Demo - AMarkets LLC - [AUDUSDb,M30]</span>
          <div className="ml-auto flex items-center gap-7 pr-[14px]">
            <button aria-label="minimize" className="h-px w-2 bg-[#888]" />
            <button aria-label="restore">
              <svg viewBox="0 0 9 9" className="size-[9px]" fill="none" stroke="#888"><path d="M.5 2.500h6v6h-6zM2.500 2V.5h6v6H7" /></svg>
            </button>
            <button aria-label="close window">
              <svg viewBox="0 0 9 9" className="size-[9px]" stroke="#777"><path d="M0 0l9 9M9 0L0 9" /></svg>
            </button>
          </div>
        </div>
        <nav className="flex h-[18px] items-center gap-3 pl-1 text-[10px] text-[#909090]">
          <svg viewBox="0 0 12 12" className="-mr-[6px] size-3" fill="none">
            <rect x="1" y="1" width="8" height="6" rx="1" fill="#d8eaff" stroke="#4a90d8" />
            <rect x="3" y="5" width="8" height="6" rx="1" fill="#fff" stroke="#4a90d8" />
            <path d="M4 9l2-2 2 2 2-2" stroke="#4a90d8" />
          </svg>
          {MENU.map((m) => (
            <button key={m}>{m}</button>
          ))}
          <div className="ml-auto flex h-4 items-center gap-[11px] bg-[#e2e2e2] px-1">
            <button aria-label="minimize chart" className="h-[2px] w-[5px] bg-[#7a8898]" />
            <button aria-label="restore chart">
              <svg viewBox="0 0 7 7" className="size-[7px]" fill="none" stroke="#7a8898"><path d="M.5 2.500h4v3h-4zM2 2V.5h4.500v3H5" /></svg>
            </button>
            <button aria-label="close chart">
              <svg viewBox="0 0 6 6" className="size-[6px]" stroke="#7a8898" strokeWidth="1.500"><path d="M0 0l6 6M6 0L0 6" /></svg>
            </button>
          </div>
        </nav>
        <Toolbar />
      </header>
      <div className="flex grow">
        <aside className="w-[176px] shrink-0 bg-[#f0f0f0] pl-[2px] pr-[3px]">
          <MarketWatch />
          <Navigator />
        </aside>
        <ChartWindow />
      </div>
    </div>
  );
}
